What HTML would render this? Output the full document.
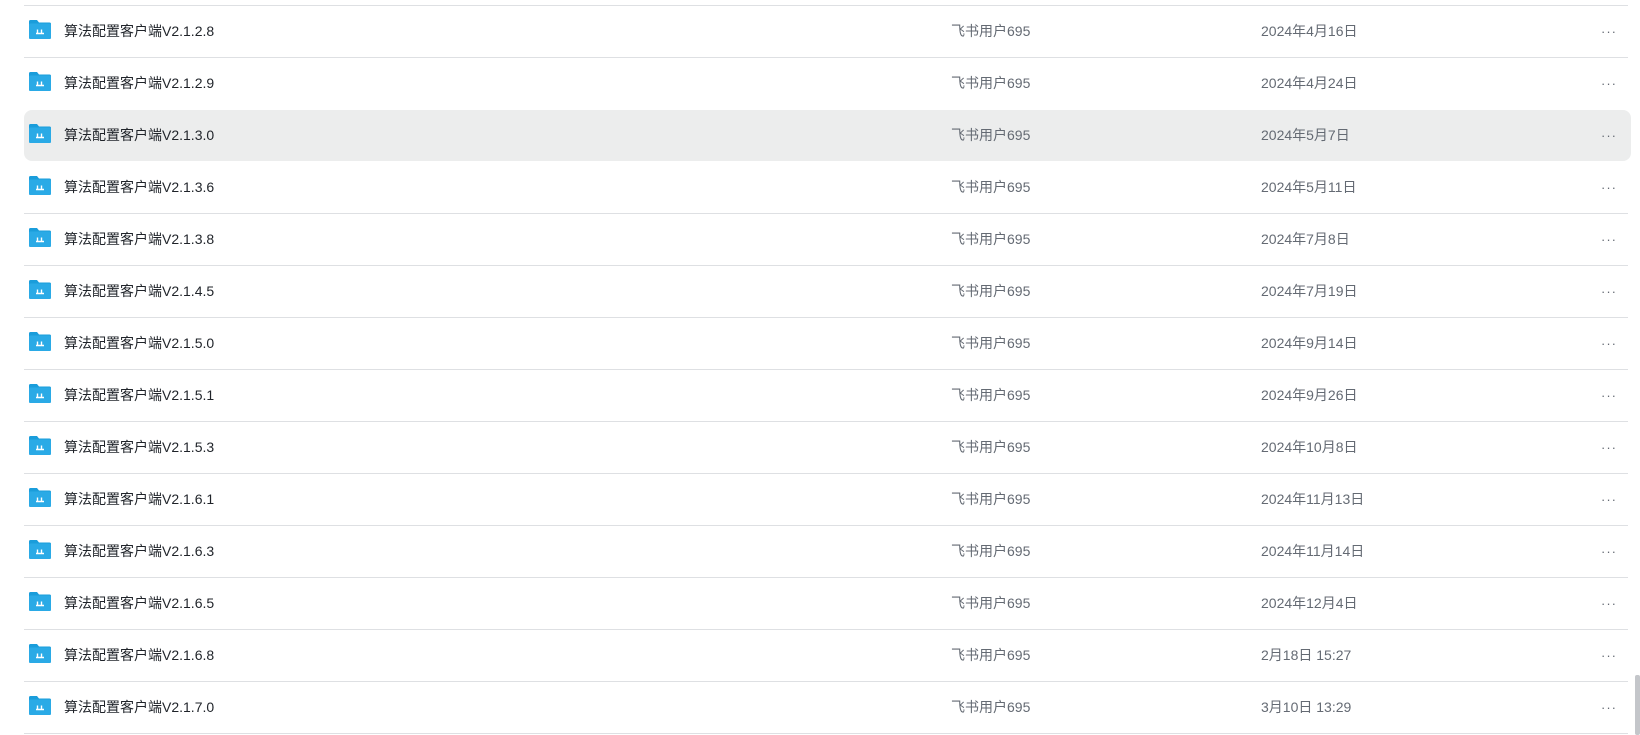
<!DOCTYPE html>
<html><head><meta charset="utf-8"><style>
body{margin:0;width:1640px;height:735px;background:#fff;position:relative;overflow:hidden;font-family:"Liberation Sans","Noto Sans CJK SC",sans-serif;font-size:14px}
.r{position:absolute;left:24px;width:1607px;height:51px}
.r.h{background:#eceded;border-radius:8px}
.line{position:absolute;left:24px;width:1604px;height:1px;background:#dee0e3}
.ic{position:absolute;left:5px;top:14px}
.n,.o,.d{position:absolute;top:15px;line-height:20px}
.n{left:40px;color:#1f2329}
.o{left:927px;color:#646a73}
.d{left:1237px;color:#646a73}
.m{position:absolute;left:1577px;top:18px;color:#646a73;letter-spacing:1px;font-size:13px}
.sb{position:absolute;left:1635px;top:675px;width:5px;height:60px;background:#c4c6ca;border-radius:2px}
</style></head><body>
<div id="c"></div>
<div class="sb"></div>
<script>
var d=[["2.1.2.8","2024年4月16日"],["2.1.2.9","2024年4月24日"],["2.1.3.0","2024年5月7日"],["2.1.3.6","2024年5月11日"],["2.1.3.8","2024年7月8日"],["2.1.4.5","2024年7月19日"],["2.1.5.0","2024年9月14日"],["2.1.5.1","2024年9月26日"],["2.1.5.3","2024年10月8日"],["2.1.6.1","2024年11月13日"],["2.1.6.3","2024年11月14日"],["2.1.6.5","2024年12月4日"],["2.1.6.8","2月18日 15:27"],["2.1.7.0","3月10日 13:29"]];
var ic='<svg class="ic" width="22" height="19" viewBox="0 0 22 19"><path d="M0 1.5Q0 0 1.5 0H8l2 2.5H20.5Q22 2.5 22 4V17.5Q22 19 20.5 19H1.5Q0 19 0 17.5Z" fill="#1a9ddb"/><rect x="0" y="3.5" width="22" height="15.5" rx="1.5" fill="#2aaae6"/><path d="M7 13.5h8M8.5 13.5v-4M12.5 13.5v-4" stroke="#fff" stroke-width="1.4"/></svg>';
var h='';
for(var i=0;i<14;i++){var t=5+i*52;
if(i!=2&&i!=3)h+='<div class="line" style="top:'+t+'px"></div>';
h+='<div class="r'+(i==2?' h':'')+'" style="top:'+(t+1)+'px">'+ic+'<div class="n">算法配置客户端V'+d[i][0]+'</div><div class="o">飞书用户695</div><div class="d">'+d[i][1]+'</div><div class="m">···</div></div>';}
h+='<div class="line" style="top:733px"></div>';
document.getElementById('c').innerHTML=h;
</script>
</body></html>
